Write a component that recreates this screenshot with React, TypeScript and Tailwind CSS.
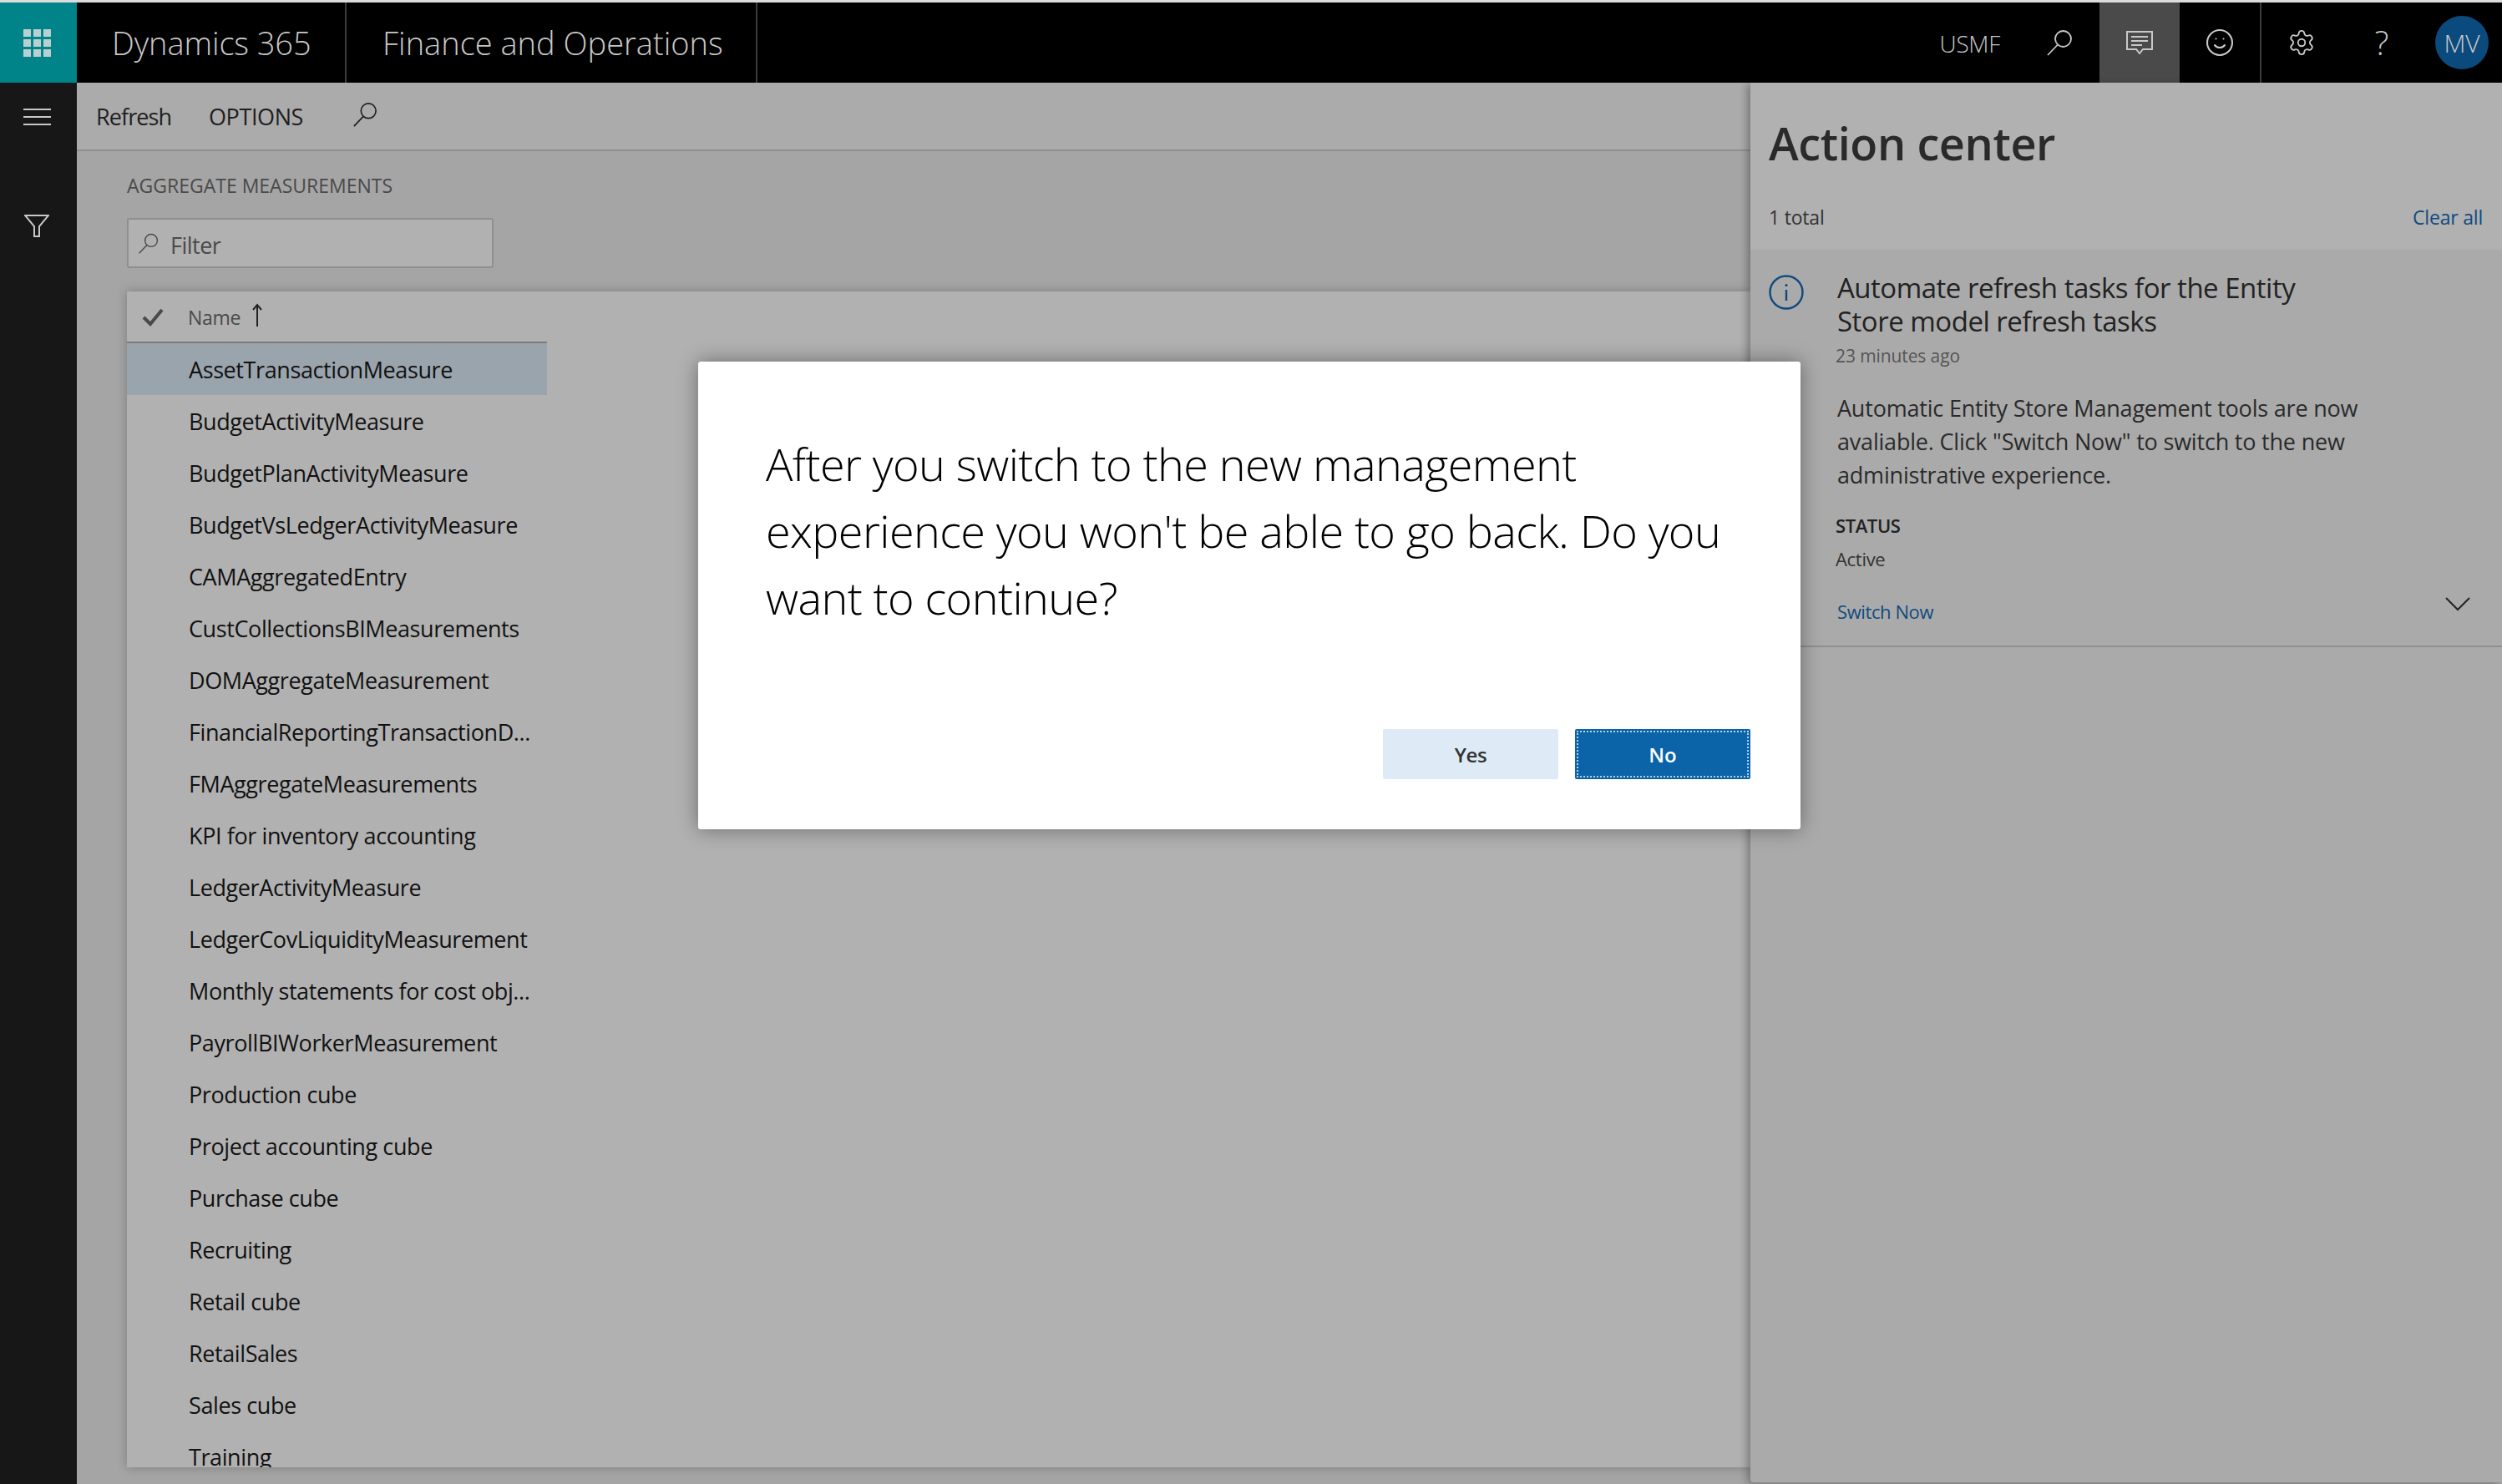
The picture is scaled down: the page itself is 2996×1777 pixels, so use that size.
import React from 'react';
import { Settings, Smile } from 'lucide-react';

const measures = [
  'AssetTransactionMeasure',
  'BudgetActivityMeasure',
  'BudgetPlanActivityMeasure',
  'BudgetVsLedgerActivityMeasure',
  'CAMAggregatedEntry',
  'CustCollectionsBIMeasurements',
  'DOMAggregateMeasurement',
  'FinancialReportingTransactionD...',
  'FMAggregateMeasurements',
  'KPI for inventory accounting',
  'LedgerActivityMeasure',
  'LedgerCovLiquidityMeasurement',
  'Monthly statements for cost obj...',
  'PayrollBIWorkerMeasurement',
  'Production cube',
  'Project accounting cube',
  'Purchase cube',
  'Recruiting',
  'Retail cube',
  'RetailSales',
  'Sales cube',
  'Training',
];

const SearchIcon = ({ className }: { className: string }) => (
  <svg viewBox="0 0 32 32" fill="none" stroke="currentColor" strokeWidth="1.8" className={className}>
    <circle cx="20.5" cy="11.5" r="9.5" />
    <path d="M14 18.5 2 31" />
  </svg>
);

const App: React.FC = () => {
  return (
    <div className="relative h-[1777px] w-full overflow-hidden bg-[#a5a5a5] font-['Open_Sans',sans-serif]">
      <div className="h-[3px] bg-[#dcdcdc]" />

      {/* top bar */}
      <header className="flex h-[96px] items-stretch bg-black text-[#c8c8c8]">
        <div className="flex w-[92px] items-center pl-[28px] bg-[#00848a]">
          <div className="grid grid-cols-3 gap-[3px]">
            {Array.from({ length: 9 }).map((_, i) => (
              <span key={i} className="h-[9px] w-[9px] bg-[#b9cfd0]" />
            ))}
          </div>
        </div>
        <div className="flex w-[323px] items-center border-r-2 border-[#3c3c3c] pl-[42px] text-[38px] font-light tracking-[-0.1px]">Dynamics 365</div>
        <div className="flex w-[492px] items-center border-r-2 border-[#3c3c3c] pl-[43px] text-[38px] font-light">Finance and Operations</div>
        <div className="ml-auto flex items-stretch">
          <div className="flex items-center pt-[2px] pr-[23px] text-[28px] font-light tracking-[-0.3px]">USMF</div>
          <div className="flex w-[96px] items-center justify-center">
            <SearchIcon className="h-[32px] w-[32px]" />
          </div>
          <div className="flex w-[96px] items-center justify-center bg-[#4a4a4a]">
            <svg viewBox="0 0 32 28" fill="none" stroke="currentColor" strokeWidth="2" className="h-[28px] w-[32px]">
              <path d="M1 1h30v21H20l-4 5-4-5H1z" />
              <path d="M6 7h20M6 12h20M6 17h13" />
            </svg>
          </div>
          <div className="flex w-[98px] items-center justify-center border-r-2 border-[#3c3c3c]">
            <Smile className="h-[36px] w-[36px]" strokeWidth={1.4} />
          </div>
          <div className="flex w-[96px] items-center justify-center">
            <Settings className="h-[34px] w-[34px]" strokeWidth={1.3} />
          </div>
          <div className="flex w-[96px] items-center justify-center text-[40px] font-light">?</div>
          <div className="flex items-center pr-[16px] pl-[16px]">
            <div className="flex h-[64px] w-[64px] items-center justify-center rounded-full bg-[#0b4a7d] text-[30px] font-light">MV</div>
          </div>
        </div>
      </header>

      <div className="flex h-[1678px]">
        {/* left rail */}
        <aside className="flex w-[92px] flex-col bg-[#171717] pl-[28px] text-[#c8c8c8]">
          <div className="mt-[31px] flex w-[33px] flex-col gap-[7px]">
            <span className="h-[2px] bg-[#c8c8c8]" />
            <span className="h-[2px] bg-[#c8c8c8]" />
            <span className="h-[2px] bg-[#c8c8c8]" />
          </div>
          <svg viewBox="0 0 30 27" fill="none" stroke="currentColor" strokeWidth="2" className="mt-[107px] ml-[1px] h-[27px] w-[30px]">
            <path d="M1 1h28L18 14v12h-6V14z" />
          </svg>
        </aside>

        {/* page content */}
        <main className="flex min-w-0 flex-1 flex-col">
          <div className="flex h-[82px] items-center border-b-2 border-[#8f8f8f] bg-[#ababab] pl-[23px] text-[27px] text-[#1f1f1f]">
            <span className="w-[135px] pt-[2px] tracking-[-0.9px]">Refresh</span>
            <span className="w-[172px] pt-[2px] tracking-[-0.4px]">OPTIONS</span>
            <SearchIcon className="mb-[4px] h-[30px] w-[30px]" />
          </div>
          <div className="flex min-h-0 flex-1 flex-col pb-[20px] pl-[60px]">
            <div className="mt-[26px] text-[23px] leading-[30px] text-[#4a4a4a]">AGGREGATE MEASUREMENTS</div>
            <div className="mt-[24px] flex h-[60px] w-[439px] items-center gap-[14px] rounded-[3px] border-2 border-[#8f8f8f] bg-[#b1b1b1] pl-[11px] text-[27px] tracking-[-0.5px] text-[#4a4a4a]">
              <SearchIcon className="h-[25px] w-[25px]" />
              <span className="pt-[6px]">Filter</span>
            </div>
            <div className="mt-[28px] min-h-0 flex-1 overflow-hidden bg-[#b1b1b1] shadow-[0_0_12px_rgba(0,0,0,0.25)]">
              <div className="flex h-[62px] w-[503px] items-center border-b-2 border-[#7c7c7c] text-[#4a4a4a]">
                <svg viewBox="0 0 26 22" fill="none" stroke="currentColor" strokeWidth="4" className="ml-[18px] mt-[2px] h-[22px] w-[26px]">
                  <path d="M2 11l8 8L24 2" />
                </svg>
                <span className="ml-[29px] pt-[2px] text-[23px] tracking-[-0.3px]">Name</span>
                <svg viewBox="0 0 12 28" fill="none" stroke="#222" strokeWidth="2" className="ml-[14px] mb-[4px] h-[28px] w-[12px]">
                  <path d="M6 28V2M1 8l5-6 5 6" />
                </svg>
              </div>
              <ul className="w-[503px]">
                {measures.map((name, i) => (
                  <li
                    key={name}
                    className={`flex h-[62px] items-center whitespace-nowrap pt-[2px] pl-[74px] text-[27px] tracking-[-0.4px] text-[#111111] ${i === 0 ? 'bg-[#9aa4ad]' : ''}`}
                  >
                    {name}
                  </li>
                ))}
              </ul>
            </div>
          </div>
        </main>

        {/* action center */}
        <section className="h-[1676px] w-[900px] rounded-bl-[4px] bg-[#aaaaaa] shadow-[-4px_2px_10px_rgba(0,0,0,0.3)]">
          <div className="h-[200px] bg-[#b1b1b1] pr-[23px] pl-[22px]">
            <h1 className="pt-[33px] text-[54px] leading-[78px] font-semibold tracking-[-0.4px] text-[#2a2a2a]">Action center</h1>
            <div className="mt-[33px] flex items-center justify-between text-[23px] leading-[34px]">
              <span className="tracking-[-0.2px] text-[#333333]">1 total</span>
              <span className="tracking-[-0.2px] text-[#0f4a7e]">Clear all</span>
            </div>
          </div>
          <div className="flex h-[476px] border-b-2 border-[#8f8f8f] pl-[22px]">
            <svg viewBox="0 0 42 42" fill="none" stroke="#0f4a7e" strokeWidth="2.4" className="mt-[30px] h-[42px] w-[42px] shrink-0">
              <circle cx="21" cy="21" r="19.5" />
              <path d="M21 18v13" />
              <circle cx="21" cy="12.5" r="1.6" fill="#0f4a7e" stroke="none" />
            </svg>
            <div className="relative flex-1 pl-[40px]">
              <div className="mt-[26px] text-[33px] leading-[40px] tracking-[-0.5px] text-[#222222]">
                Automate refresh tasks for the Entity
                <br />
                Store model refresh tasks
              </div>
              <div className="mt-[5px] -ml-[2px] text-[21px] leading-[32px] tracking-[-0.1px] text-[#555555]">23 minutes ago</div>
              <div className="mt-[27px] text-[27px] leading-[40px] tracking-[-0.2px] text-[#2a2a2a]">
                Automatic Entity Store Management tools are now
                <br />
                avaliable. Click "Switch Now" to switch to the new
                <br />
                administrative experience.
              </div>
              <div className="mt-[24px] -ml-[2px] text-[22px] leading-[32px] font-semibold tracking-[-0.4px] text-[#222222]">STATUS</div>
              <div className="mt-[8px] -ml-[2px] text-[22px] leading-[32px] tracking-[-0.3px] text-[#333333]">Active</div>
              <div className="mt-[31px] text-[22px] leading-[32px] tracking-[-0.4px] text-[#0f4a7e]">Switch Now</div>
              <svg viewBox="0 0 30 17" fill="none" stroke="#222" strokeWidth="2" className="absolute top-[416px] right-[38px] h-[17px] w-[30px]">
                <path d="M1 1l14 14L29 1" />
              </svg>
            </div>
          </div>
        </section>
      </div>

      {/* confirm dialog */}
      <div className="absolute top-[433px] left-[836px] h-[560px] w-[1320px] rounded-[3px] bg-white shadow-[0_0_24px_rgba(0,0,0,0.4)]">
        <p className="pt-[82px] pr-[40px] pl-[81px] text-[54px] leading-[80px] font-light tracking-[-0.6px] text-black">
          After you switch to the new management
          <br />
          experience you won't be able to go back. Do you
          <br />
          want to continue?
        </p>
        <div className="absolute top-[440px] right-[60px] flex gap-[20px] text-[24px] font-semibold">
          <button className="h-[60px] w-[210px] rounded-[2px] bg-[#deebf7] pt-[2px] tracking-[-0.4px] text-[#333333]">Yes</button>
          <button className="h-[60px] w-[210px] rounded-[2px] bg-[#0b63a8] pt-[2px] text-white outline-2 -outline-offset-4 outline-white/70 outline-dotted">No</button>
        </div>
      </div>
    </div>
  );
};

export default App;
